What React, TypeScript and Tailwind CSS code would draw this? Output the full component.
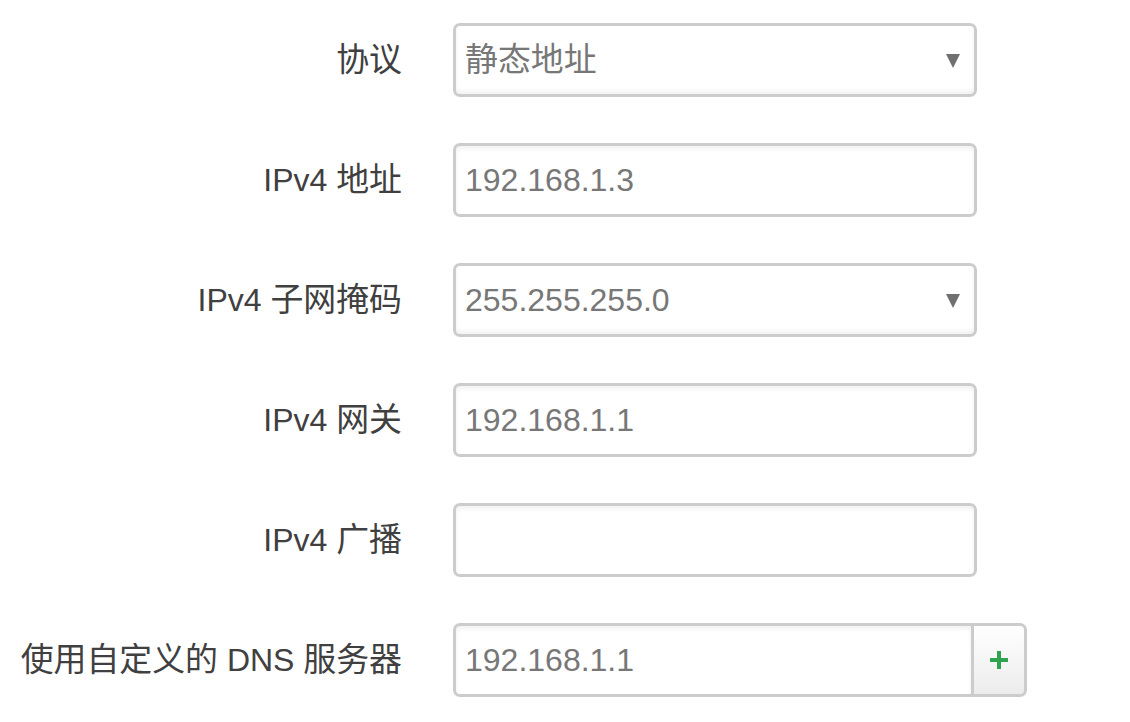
import React from "react";

const font = { fontFamily: '"Liberation Sans", Arial, "Noto Sans CJK SC", sans-serif' };

function Mixed({ text }: { text: string }) {
  const parts = text.split(/([\u4e00-\u9fff]+)/).filter((p) => p.length > 0);
  return (
    <>
      {parts.map((p, i) =>
        /[\u4e00-\u9fff]/.test(p) ? (
          <span key={i} className="text-[32.9px]">
            {p}
          </span>
        ) : (
          <span key={i}>{p}</span>
        )
      )}
    </>
  );
}

function Label({ text }: { text: string }) {
  return (
    <div className="w-[403px] shrink-0 pr-[1px] text-right text-[32px] leading-none whitespace-nowrap text-[#404040]">
      <Mixed text={text} />
    </div>
  );
}

function Arrow() {
  return (
    <svg width="16" height="15" viewBox="0 0 16 15" className="shrink-0">
      <polygon points="1,1 15,1 8,15" fill="#707070" />
    </svg>
  );
}

function Select({ value }: { value: string }) {
  return (
    <div className="flex h-[74px] w-[524px] items-center justify-between rounded-[7px] border-[3px] border-[#cccccc] bg-white pl-[9px] pr-[13px] text-[32px] leading-none text-[#777777] shadow-[inset_0_-3px_4px_rgba(0,0,0,0.06)]">
      <span>
        <Mixed text={value} />
      </span>
      <Arrow />
    </div>
  );
}

function Input({ value }: { value?: string }) {
  return (
    <div className="flex h-[74px] w-[524px] items-center rounded-[7px] border-[3px] border-[#cccccc] bg-white pl-[9px] text-[32px] leading-none text-[#777777] shadow-[inset_0_3px_4px_rgba(0,0,0,0.06)]">
      {value ?? ""}
    </div>
  );
}

function Row({ label, children }: { label: string; children: React.ReactNode }) {
  return (
    <div className="flex h-[74px] items-center gap-[50px]">
      <Label text={label} />
      {children}
    </div>
  );
}

export default function App() {
  return (
    <div className="h-[722px] w-[1130px] overflow-hidden bg-white pt-[23px]" style={font}>
      <div className="flex flex-col gap-[46px]">
        <Row label="协议">
          <Select value="静态地址" />
        </Row>
        <Row label="IPv4 地址">
          <Input value="192.168.1.3" />
        </Row>
        <Row label="IPv4 子网掩码">
          <Select value="255.255.255.0" />
        </Row>
        <Row label="IPv4 网关">
          <Input value="192.168.1.1" />
        </Row>
        <Row label="IPv4 广播">
          <Input />
        </Row>
        <Row label="使用自定义的 DNS 服务器">
          <div className="flex h-[74px]">
            <div className="flex h-[74px] w-[521px] items-center rounded-l-[7px] border-[3px] border-[#cccccc] bg-white pl-[9px] text-[32px] leading-none text-[#777777] shadow-[inset_0_3px_4px_rgba(0,0,0,0.06)]">
              192.168.1.1
            </div>
            <div className="-ml-[3px] flex h-[74px] w-[56px] items-center justify-center rounded-r-[7px] border-[3px] border-[#cccccc] bg-gradient-to-b from-white to-[#ececec]">
              <svg width="18" height="18" viewBox="0 0 18 18">
                <rect x="7" y="0" width="4" height="18" fill="#2ea44f" />
                <rect x="0" y="7" width="18" height="4" fill="#2ea44f" />
              </svg>
            </div>
          </div>
        </Row>
      </div>
    </div>
  );
}
